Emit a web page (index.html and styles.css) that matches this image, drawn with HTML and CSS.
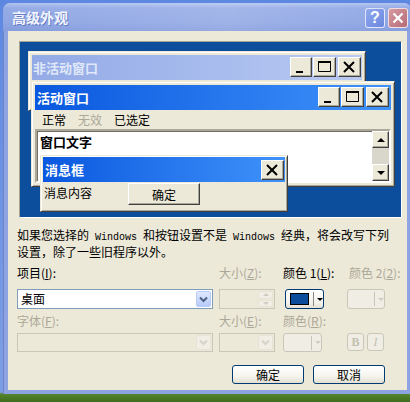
FILE: index.html
```html
<!DOCTYPE html>
<html>
<head>
  <meta charset="utf-8">
  <title>高级外观</title>
  <link rel="stylesheet" href="styles.css">
</head>
<body>
  <div class="dialog">
    <div class="titlebar">
      <span class="title">高级外观</span>
      <span class="tbtn help">?</span>
      <span class="tbtn close">
        <svg width="12" height="12" viewBox="0 0 12 12"><path d="M1.5 1.5L10.5 10.5M10.5 1.5L1.5 10.5" stroke="#fff" stroke-width="2.2"/></svg>
      </span>
    </div>

    <div class="content">
      <div class="preview">

        <div class="win inactive-win">
          <div class="caption">
            <span class="cap-text">非活动窗口</span>
            <div class="cap-btns">
              <span class="cbtn"><svg width="20" height="18"><rect x="5" y="13" width="7" height="2"/></svg></span>
              <span class="cbtn wide"><svg width="21" height="18"><path d="M4.5 3.5h12v10h-12z" fill="none" stroke="#000"/><rect x="4" y="3" width="13" height="2"/></svg></span>
              <span class="cbtn wide"><svg width="21" height="18"><path d="M5 4l10 10M15 4L5 14" stroke="#000" stroke-width="2"/></svg></span>
            </div>
          </div>
        </div>

        <div class="win active-win">
          <div class="caption">
            <span class="cap-text">活动窗口</span>
            <div class="cap-btns">
              <span class="cbtn"><svg width="20" height="18"><rect x="5" y="13" width="7" height="2"/></svg></span>
              <span class="cbtn wide"><svg width="21" height="18"><path d="M4.5 3.5h12v10h-12z" fill="none" stroke="#000"/><rect x="4" y="3" width="13" height="2"/></svg></span>
              <span class="cbtn wide"><svg width="21" height="18"><path d="M5 4l10 10M15 4L5 14" stroke="#000" stroke-width="2"/></svg></span>
            </div>
          </div>
          <div class="menubar">
            <span>正常</span>
            <span class="disabled">无效</span>
            <span>已选定</span>
          </div>
          <div class="client">
            <div class="client-text">窗口文字</div>
            <div class="scrollbar">
              <span class="sbtn-arrow"><span class="tri-up"></span></span>
              <span class="track"></span>
              <span class="sbtn-arrow"><span class="tri-down"></span></span>
            </div>
          </div>
        </div>

        <div class="win msgbox">
          <div class="caption">
            <span class="cap-text">消息框</span>
            <div class="cap-btns">
              <span class="cbtn wide"><svg width="21" height="18"><path d="M5 4l10 10M15 4L5 14" stroke="#000" stroke-width="2"/></svg></span>
            </div>
          </div>
          <div class="msg-body">
            <span class="msg-text">消息内容</span>
            <span class="classic-btn">确定</span>
          </div>
        </div>

      </div>

      <p class="note">
        如果您选择的<span class="latin"> Windows </span>和按钮设置不是<span class="latin"> Windows </span>经典，将会改写下列<br>
        设置，除了一些旧程序以外。
      </p>

      <div class="fields">
        <label class="lbl">项目(<u>I</u>):</label>
        <label class="lbl off">大小(<u>Z</u>):</label>
        <label class="lbl">颜色 1(<u>L</u>):</label>
        <label class="lbl off col4">颜色 2(<u>2</u>):</label>

        <div class="combo wide-combo">
          <span class="combo-text">桌面</span>
          <span class="drop"><svg width="9" height="7" viewBox="0 0 9 7"><path d="M1 1.5l3.5 3.5 3.5-3.5" fill="none" stroke="#4d6185" stroke-width="2"/></svg></span>
        </div>
        <div class="spin">
          <span class="spin-box"></span>
          <span class="spin-btns">
            <span class="spin-half"><span class="tri-up faint"></span></span>
            <span class="spin-half"><span class="tri-down faint"></span></span>
          </span>
        </div>
        <div class="colorbtn first">
          <span class="swatch"></span>
          <span class="sep"></span>
          <span class="tri-down"></span>
        </div>
        <div class="colorbtn off shifted">
          <span class="sep"></span>
          <span class="tri-down faint"></span>
        </div>

        <label class="lbl off row2">字体(<u>F</u>):</label>
        <label class="lbl off row2">大小(<u>E</u>):</label>
        <label class="lbl off row2">颜色(<u>R</u>):</label>
        <span></span>

        <div class="combo wide-combo off">
          <span class="combo-text"></span>
          <span class="drop"><svg width="9" height="7" viewBox="0 0 9 7"><path d="M1 1.5l3.5 3.5 3.5-3.5" fill="none" stroke="#d6d3c8" stroke-width="2"/></svg></span>
        </div>
        <div class="combo small-combo off">
          <span class="combo-text"></span>
          <span class="drop"><svg width="9" height="7" viewBox="0 0 9 7"><path d="M1 1.5l3.5 3.5 3.5-3.5" fill="none" stroke="#d6d3c8" stroke-width="2"/></svg></span>
        </div>
        <div class="colorbtn off">
          <span class="sep"></span>
          <span class="tri-down faint"></span>
        </div>
        <div class="style-btns">
          <span class="fbtn bold">B</span>
          <span class="fbtn italic">I</span>
        </div>
      </div>

      <div class="actions">
        <span class="xp-btn">确定</span>
        <span class="xp-btn">取消</span>
      </div>
    </div>
  </div>
</body>
</html>
```

FILE: styles.css
```css
body {
  margin: 0;
  width: 410px;
  height: 402px;
  overflow: hidden;
  background: linear-gradient(#5d88e2, #7c9de4 90%, #7c9de4 97.6%, #56852f 98%, #3e6c1d);
  font-family: "Noto Sans CJK SC", sans-serif;
  font-size: 12px;
  color: #000;
}

.dialog {
  margin: 3px 0 0 3px;
  width: 408px;
  height: 391px;
  display: flex;
  flex-direction: column;
  background: #8ea4e2;
  border-radius: 7px 7px 0 0;
  box-shadow: inset 1px 0 #6d84c8;
  padding-bottom: 4px;
  box-sizing: border-box;
}

/* title bar (inactive xp look) */
.titlebar {
  height: 28px;
  display: flex;
  align-items: center;
  padding: 0 3px 0 9px;
  border-radius: 7px 7px 0 0;
  background:
    linear-gradient(to right, rgba(255,255,255,0), rgba(255,255,255,0.14) 55%, rgba(255,255,255,0)),
    linear-gradient(#b2c4ef, #95abe6 18%, #8fa6e3 70%, #859dde);
}

.title {
  flex: 1;
  color: #f2f5fd;
  font-weight: bold;
  font-size: 14px;
  line-height: 16px;
  text-shadow: 1px 1px rgba(60, 80, 160, 0.5);
}

.tbtn {
  width: 18px;
  height: 18px;
  border: 1px solid rgba(255, 255, 255, 0.75);
  border-radius: 3px;
  display: flex;
  align-items: center;
  justify-content: center;
  margin-top: 1px;
}

.help {
  background: linear-gradient(135deg, #91a9ef, #6a87de);
  color: #fff;
  font-family: "Liberation Sans", sans-serif;
  font-weight: bold;
  font-size: 16px;
}

.close {
  margin-left: 3px;
  background: linear-gradient(135deg, #d69aa0, #b66c78);
}

.content {
  flex: 1;
  margin: 0 4px 0 5px;
  background: #ece9d8;
  display: flex;
  flex-direction: column;
}

/* preview */
.preview {
  position: relative;
  margin: 10px 5px 0 11px;
  height: 177px;
  box-sizing: border-box;
  background: #0c4e9b;
  border: 1px solid;
  border-color: #a7a493 #fff #fff #a7a493;
}

.win {
  position: absolute;
  background: #ece9d8;
  border: 1px solid;
  border-color: #ece9d8 #404040 #404040 #ece9d8;
  box-shadow: inset 1px 1px #fff, inset -1px -1px #aca899;
  padding: 3px;
  box-sizing: border-box;
  display: flex;
  flex-direction: column;
}

.inactive-win {
  left: 8px;
  top: 9px;
  width: 338px;
  height: 60px;
}

.active-win {
  left: 11px;
  top: 39px;
  width: 364px;
  height: 106px;
}

.msgbox {
  left: 20px;
  top: 113px;
  width: 248px;
  height: 57px;
  padding: 1px 2px 2px;
}

.caption {
  height: 25px;
  flex: none;
  display: flex;
  align-items: flex-start;
  padding-right: 1px;
}

.cap-text {
  flex: 1;
  font-weight: bold;
  font-size: 13px;
  line-height: 25px;
  padding-left: 1px;
}

.inactive-win .caption {
  background: linear-gradient(to right, #94aae6, #a9bdee 60%, #b9caf1);
}

.inactive-win .cap-text {
  color: #dfe7f8;
}

.active-win .caption,
.msgbox .caption {
  background: linear-gradient(to right, #0a58df, #2878ee 55%, #3f92fa);
}

.active-win .caption {
  padding-right: 2px;
}

.active-win .cap-text,
.msgbox .cap-text {
  color: #fff;
  padding-left: 2px;
}

.cap-btns {
  display: flex;
  gap: 1px;
  margin-top: 2px;
}

.msgbox .cap-btns {
  margin-top: 3px;
}

.cbtn {
  width: 20px;
  height: 18px;
  background: #ece9d8;
  border: 1px solid;
  border-color: #fff #404040 #404040 #fff;
  box-shadow: inset -1px -1px #aca899;
  display: flex;
}

.cbtn.wide {
  width: 21px;
}

.cbtn.wide:last-child {
  margin-left: 1px;
}

.menubar {
  height: 19px;
  display: flex;
  align-items: center;
  gap: 12px;
  padding-left: 7px;
  font-size: 12px;
}

.menubar .disabled {
  color: #aca899;
}

.client {
  flex: 1;
  display: flex;
  background: #fff;
  border: 2px solid;
  border-color: #aca899 #fff #fff #aca899;
  box-shadow: inset 1px 1px #716f64;
}

.client-text {
  flex: 1;
  font-weight: bold;
  font-size: 13px;
  line-height: 16px;
  padding: 3px 3px;
}

.scrollbar {
  width: 17px;
  display: flex;
  flex-direction: column;
}

.sbtn-arrow {
  height: 17px;
  box-sizing: border-box;
  background: #ece9d8;
  border: 1px solid;
  border-color: #fff #404040 #404040 #fff;
  box-shadow: inset -1px -1px #aca899;
  display: flex;
  align-items: center;
  justify-content: center;
}

.track {
  flex: 1;
  background: #d9d6cb;
}

.tri-up {
  width: 0;
  height: 0;
  border-left: 4px solid transparent;
  border-right: 4px solid transparent;
  border-bottom: 4px solid #000;
}

.tri-down {
  width: 0;
  height: 0;
  border-left: 3px solid transparent;
  border-right: 3px solid transparent;
  border-top: 3px solid #000;
}

.sbtn-arrow .tri-down {
  border-width: 4px 4px 0;
}

.tri-up.faint {
  border-bottom-color: #cfccc0;
  border-width: 0 3px 3px;
}

.tri-down.faint {
  border-top-color: #cfccc0;
}

.msg-body {
  flex: 1;
  display: flex;
  align-items: flex-start;
}

.msg-text {
  padding: 3px 0 0 1px;
  line-height: 16px;
}

.classic-btn {
  margin: 1px 0 0 36px;
  width: 72px;
  height: 22px;
  box-sizing: border-box;
  border: 1px solid;
  border-color: #fff #404040 #404040 #fff;
  box-shadow: inset -1px -1px #aca899;
  display: flex;
  align-items: center;
  justify-content: center;
}

/* note text */
.note {
  margin: 10px 0 0 9px;
  line-height: 14px;
  white-space: nowrap;
}

.latin {
  font-family: "Liberation Mono", monospace;
  font-size: 10px;
}

/* fields */
.fields {
  margin-top: 7px;
  padding-left: 9px;
  display: grid;
  grid-template-columns: 202px 64px 63px 38px;
  grid-template-rows: 23px 20px 24px 19px;
}

.lbl {
  line-height: 14px;
  white-space: nowrap;
}

.lbl u {
  text-underline-offset: 1px;
}

.lbl.off {
  color: #aca899;
}

.lbl.col4 {
  padding-left: 3px;
}

.lbl.row2 {
  margin-top: 5px;
}

.combo {
  display: flex;
  border: 1px solid #7f9db9;
  background: #fff;
  box-sizing: border-box;
}

.wide-combo {
  width: 196px;
}

.small-combo {
  width: 56px;
}

.combo-text {
  flex: 1;
  padding-left: 3px;
  line-height: 18px;
}

.drop {
  width: 15px;
  margin: 1px;
  border: 1px solid #b9cbf5;
  border-radius: 2px;
  background: linear-gradient(#dfe8fe, #b6cbfa);
  display: flex;
  align-items: center;
  justify-content: center;
  box-sizing: border-box;
}

.combo.off {
  border-color: #c9c7ba;
  background: #ece9d8;
}

.combo.off .drop {
  border-color: #e6e3d6;
  background: #f1efe5;
}

.spin {
  width: 56px;
  display: flex;
  border: 1px solid #c9c7ba;
  box-sizing: border-box;
}

.spin-box {
  flex: 1;
}

.spin-btns {
  width: 15px;
  display: flex;
  flex-direction: column;
  gap: 1px;
  padding: 1px;
}

.spin-half {
  flex: 1;
  border: 1px solid #e6e3d6;
  border-radius: 2px;
  background: #f1efe5;
  display: flex;
  align-items: center;
  justify-content: center;
}

.colorbtn {
  width: 39px;
  display: flex;
  align-items: center;
  border: 1px solid #003c74;
  border-radius: 3px;
  background: linear-gradient(#fff, #f3f1ea 70%, #e3dfd2);
  box-sizing: border-box;
  padding-left: 4px;
}

.colorbtn.first {
  margin-left: 2px;
}

.colorbtn.shifted {
  margin-left: 1px;
  width: 38px;
}

.swatch {
  width: 20px;
  height: 10px;
  border: 1px solid #000;
  background: #0b4d9c;
}

.colorbtn .sep {
  width: 1px;
  height: 14px;
  background: #888;
  margin: 0 3px 0 4px;
}

.colorbtn.off {
  border-color: #c9c7ba;
  background: #f0eee4;
  padding-left: 27px;
}

.colorbtn.shifted.off {
  padding-left: 26px;
}

.colorbtn.off .sep {
  background: #c9c7ba;
  margin-left: 0;
}

.style-btns {
  display: flex;
  gap: 3px;
  margin-left: 1px;
}

.fbtn {
  width: 18px;
  height: 18px;
  box-sizing: border-box;
  border: 1px solid #c9c7ba;
  border-radius: 3px;
  background: #f0eee4;
  color: #c2bfb1;
  display: flex;
  align-items: center;
  justify-content: center;
  font-family: "Liberation Serif", serif;
  font-size: 12px;
}

.fbtn.bold {
  font-weight: bold;
}

.fbtn.italic {
  font-style: italic;
}

/* bottom buttons */
.actions {
  margin-top: 13px;
  display: flex;
  justify-content: flex-end;
  gap: 9px;
  padding-right: 22px;
}

.xp-btn {
  width: 72px;
  height: 19px;
  box-sizing: border-box;
  border: 1px solid #003c74;
  border-radius: 3px;
  background: linear-gradient(#fff, #f5f4ee 60%, #e3dfd2);
  display: flex;
  align-items: center;
  justify-content: center;
  line-height: 14px;
}
```
